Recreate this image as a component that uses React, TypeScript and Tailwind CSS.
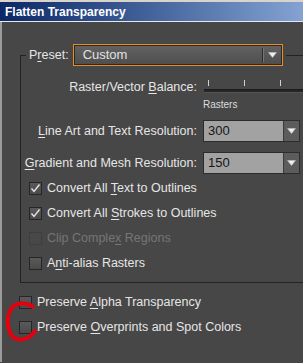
import React from "react";

const font = "font-['Liberation_Sans',Arial,sans-serif]";

const Arrow = () => (
  <svg width="9" height="6" viewBox="0 0 9 6">
    <path d="M0.5 0.5 H8.5 L4.5 5.5 Z" fill="#f0f0f0" stroke="#bdbdbd" strokeWidth="0.6" />
  </svg>
);

const Check = ({ checked, disabled }: { checked?: boolean; disabled?: boolean }) => (
  <div
    className={
      "w-[13px] h-[13px] border flex items-center justify-center shrink-0 " +
      (disabled
        ? "border-[#3e3e3e] bg-[#484848]"
        : "border-[#262626] bg-gradient-to-b from-[#5a5a5a] to-[#4a4a4a]")
    }
  >
    {checked && (
      <svg width="11" height="11" viewBox="0 0 11 11">
        <path d="M1.5 5.5 L4 8.5 L9.5 1.5" fill="none" stroke="#e4e4e4" strokeWidth="1.4" />
      </svg>
    )}
  </div>
);

const CheckRow = ({ children, checked, disabled }: { children: React.ReactNode; checked?: boolean; disabled?: boolean }) => (
  <div className="h-[25px] flex items-center gap-[5px]">
    <Check checked={checked} disabled={disabled} />
    <span className={"whitespace-nowrap " + (disabled ? "text-[#767676]" : "text-[#e6e6e6]")}>{children}</span>
  </div>
);

const Combo = ({ value }: { value: string }) => (
  <div className="w-[97px] h-[22px] flex border border-[#2c2c2c] bg-[#a2a2a2]">
    <div className="flex-1 pl-[4px] flex items-center text-[#161616] text-[13px]">{value}</div>
    <div className="w-[16px] bg-[#5c5c5c] border-l border-[#3a3a3a] flex items-center justify-center">
      <Arrow />
    </div>
  </div>
);

export default function App() {
  return (
    <div className={`w-[303px] h-[363px] overflow-hidden bg-[#474747] text-[12.5px] text-[#e6e6e6] ${font}`}>
      <div className="h-[2px] bg-[#d8d4cc]" />
      <div className="h-[20px] bg-gradient-to-r from-[#0b2767] to-[#84a3d3] flex items-center pl-[5px] border-b border-[#e8e8e8]">
        <span className="text-white font-bold text-[12px]">Flatten Transparency</span>
      </div>
      <div className="border-l-2 border-[#9c9c9c] h-[340px] pt-[22px]">
        <fieldset className="ml-[18px] border-l border-t border-b border-[#232323] pb-[6px]">
          <legend className="ml-[5px] px-[3px]">
            <div className="flex items-center gap-[4px]">
              <span>
                P<u className="underline-offset-2">r</u>eset:
              </span>
              <div className="w-[210px] h-[22px] border border-[#ee8a1e] flex">
                <div className="flex-1 flex items-center border border-[#2a2a2a] bg-gradient-to-b from-[#616161] to-[#4f4f4f]">
                  <span className="flex-1 pl-[8px] text-[13px] text-[#e2e2e2]">Custom</span>
                  <div className="w-[2px] h-[14px] border-l border-[#2c2c2c] bg-[#777]" />
                  <div className="w-[17px] flex justify-center">
                    <Arrow />
                  </div>
                </div>
              </div>
            </div>
          </legend>

          <div className="mt-[13px] h-[16px] flex items-center">
            <div className="w-[177px] text-right pr-[1px] whitespace-nowrap">
              Raster/Vector <u className="underline-offset-2">B</u>alance:
            </div>
            <div className="ml-[6px] flex-1 h-[16px] flex flex-col">
              <div className="h-[6px] mt-[1px] flex">
                <div className="ml-[4px] w-px h-full bg-[#d0d0d0]" />
                <div className="ml-[35px] w-px h-full bg-[#d0d0d0]" />
                <div className="ml-[35px] w-px h-full bg-[#d0d0d0]" />
              </div>
              <div className="mt-[3px] h-[4px] bg-[#262626] border-t border-[#1a1a1a] border-b border-b-[#555]" />
            </div>
          </div>

          <div className="mt-[4px] ml-[182px] h-[12px] text-[10px] leading-[12px] text-[#dcdcdc]">Rasters</div>

          <div className="mt-[9px] flex items-center">
            <div className="w-[177px] text-right pr-[1px] whitespace-nowrap">
              <u className="underline-offset-2">L</u>ine Art and Text Resolution:
            </div>
            <div className="ml-[5px]">
              <Combo value="300" />
            </div>
          </div>

          <div className="mt-[10px] flex items-center">
            <div className="w-[177px] text-right pr-[1px] whitespace-nowrap">
              <u className="underline-offset-2">G</u>radient and Mesh Resolution:
            </div>
            <div className="ml-[5px]">
              <Combo value="150" />
            </div>
          </div>

          <div className="mt-[2px] pl-[8px]">
            <CheckRow checked>
              Convert All <u className="underline-offset-2">T</u>ext to Outlines
            </CheckRow>
            <CheckRow checked>
              Convert All <u className="underline-offset-2">S</u>trokes to Outlines
            </CheckRow>
            <CheckRow disabled>
              Clip Comple<u className="underline-offset-2">x</u> Regions
            </CheckRow>
            <CheckRow>
              A<u className="underline-offset-2">n</u>ti-alias Rasters
            </CheckRow>
          </div>
        </fieldset>

        <div className="mt-[7px] pl-[17px] relative">
          <CheckRow>
            Preserve <u className="underline-offset-2">A</u>lpha Transparency
          </CheckRow>
          <CheckRow>
            Preserve <u className="underline-offset-2">O</u>verprints and Spot Colors
          </CheckRow>
          <svg className="absolute left-0 top-0 pointer-events-none" width="60" height="60" viewBox="2 290 60 60">
            <path
              d="M33 307 C27 302 16 302 11 309 C6 317 7 331 13 337 C19 342 30 339 35 331"
              fill="none"
              stroke="#e4000f"
              strokeWidth="4"
              strokeLinecap="round"
            />
          </svg>
        </div>
      </div>
    </div>
  );
}
